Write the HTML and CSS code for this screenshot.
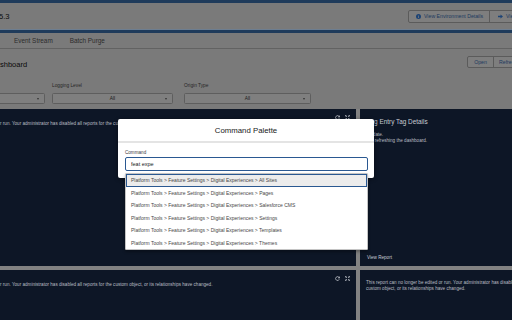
FILE: index.html
```html
<!DOCTYPE html>
<html lang="en">
<head>
<meta charset="utf-8">
<title>Command Palette</title>
<link rel="stylesheet" href="styles.css">
</head>
<body>
<div class="page">
  <div class="strip strip-top"></div>
  <header class="appbar">
    <span class="app-version">5.3</span>
    <div class="app-actions">
      <button class="btn btn-env">
        <svg class="btn-icon" viewBox="0 0 10 10" width="5" height="5"><circle cx="5" cy="5" r="5" fill="#1d4476"/><rect x="4.2" y="4.2" width="1.6" height="3.8" fill="#7e7e7e"/><circle cx="5" cy="2.7" r="0.9" fill="#7e7e7e"/></svg>
        <span>View Environment Details</span>
      </button>
      <button class="btn btn-logs">
        <svg class="btn-icon" viewBox="0 0 10 10" width="5" height="5"><path d="M0 3.5h5V1l5 4-5 4V6.5H0z" fill="#1d4476"/></svg>
        <span>View Logs</span>
      </button>
    </div>
  </header>
  <div class="strip strip-nav"></div>
  <nav class="tabs">
    <span class="tab">Event Stream</span>
    <span class="tab">Batch Purge</span>
  </nav>
  <section class="dash-head">
    <h1 class="dash-title">shboard</h1>
    <div class="btn-group">
      <button class="gbtn gbtn-open">Open</button>
      <button class="gbtn gbtn-refresh">Refresh</button>
    </div>
  </section>
  <section class="filters">
    <div class="filter filter-1">
      <span class="filter-label"></span>
      <div class="select"><span></span><span class="select-value"></span><span class="select-arrow"></span></div>
    </div>
    <div class="filter filter-2">
      <span class="filter-label">Logging Level</span>
      <div class="select"><span></span><span class="select-value">All</span><span class="select-arrow"></span></div>
    </div>
    <div class="filter filter-3">
      <span class="filter-label">Origin Type</span>
      <div class="select"><span></span><span class="select-value">All</span><span class="select-arrow"></span></div>
    </div>
  </section>
  <section class="grid">
    <div class="panel panel-left">
      <div class="panel-tools">
        <svg viewBox="0 0 10 10" width="5" height="5"><path d="M8.3 3.2A3.8 3.8 0 1 0 8.6 6.4" fill="none" stroke="#c3c7ce" stroke-width="1.5"/><path d="M9.6 0.6v4h-4z" fill="#c3c7ce"/></svg>
        <svg viewBox="0 0 10 10" width="5" height="5"><path d="M1 1l3 3M9 1L6 4M1 9l3-3M9 9L6 6" stroke="#c3c7ce" stroke-width="1.4"/><path d="M0.5 0.5h3.2L0.5 3.7zM9.5 0.5v3.2L6.3 0.5zM0.5 9.5V6.3l3.2 3.2zM9.5 9.5H6.3l3.2-3.2z" fill="#c3c7ce"/></svg>
      </div>
      <p class="panel-text">r run. Your administrator has disabled all reports for the custom object, or its relationships have changed.</p>
    </div>
    <div class="panel panel-right">
      <h2 class="panel-title">Log Entry Tag Details</h2>
      <p class="panel-text">Update.<br>Try refreshing the dashboard.</p>
      <a class="panel-link">View Report</a>
    </div>
    <div class="panel panel-left">
      <div class="panel-tools">
        <svg viewBox="0 0 10 10" width="5" height="5"><path d="M8.3 3.2A3.8 3.8 0 1 0 8.6 6.4" fill="none" stroke="#c3c7ce" stroke-width="1.5"/><path d="M9.6 0.6v4h-4z" fill="#c3c7ce"/></svg>
        <svg viewBox="0 0 10 10" width="5" height="5"><path d="M1 1l3 3M9 1L6 4M1 9l3-3M9 9L6 6" stroke="#c3c7ce" stroke-width="1.4"/><path d="M0.5 0.5h3.2L0.5 3.7zM9.5 0.5v3.2L6.3 0.5zM0.5 9.5V6.3l3.2 3.2zM9.5 9.5H6.3l3.2-3.2z" fill="#c3c7ce"/></svg>
      </div>
      <p class="panel-text">r run. Your administrator has disabled all reports for the custom object, or its relationships have changed.</p>
    </div>
    <div class="panel panel-right panel-bottom">
      <p class="panel-text">This report can no longer be edited or run. Your administrator has disabled all reports for the<br>custom object, or its relationships have changed.</p>
    </div>
  </section>
</div>

<div class="modal" role="dialog" aria-label="Command Palette">
  <div class="modal-header">Command Palette</div>
  <div class="modal-body">
    <label class="field-label" for="cmd">Command</label>
    <div class="combo">
      <input id="cmd" class="combo-input" type="text" value="feat expe">
      <ul class="listbox">
        <li class="option active">Platform Tools &gt; Feature Settings &gt; Digital Experiences &gt; All Sites</li>
        <li class="option">Platform Tools &gt; Feature Settings &gt; Digital Experiences &gt; Pages</li>
        <li class="option">Platform Tools &gt; Feature Settings &gt; Digital Experiences &gt; Salesforce CMS</li>
        <li class="option">Platform Tools &gt; Feature Settings &gt; Digital Experiences &gt; Settings</li>
        <li class="option">Platform Tools &gt; Feature Settings &gt; Digital Experiences &gt; Templates</li>
        <li class="option">Platform Tools &gt; Feature Settings &gt; Digital Experiences &gt; Themes</li>
      </ul>
    </div>
  </div>
</div>
</body>
</html>
```

FILE: styles.css
```css
* { box-sizing: border-box; margin: 0; padding: 0; }
html, body { width: 512px; height: 320px; overflow: hidden; }
body {
  position: relative;
  background: #7a7a7a;
  font-family: "Liberation Sans", Arial, sans-serif;
  color: #111;
}
button { font-family: inherit; }
.page { width: 512px; }

.strip { background: #1f3b5b; }
.strip-top { height: 3px; }
.strip-nav { height: 4px; border-top: 1px solid #6d7e91; }

.appbar { height: 26px; display: flex; align-items: center; }
.app-version { font-size: 7.6px; margin-left: -1px; color: #0c0c0c; }
.app-actions { margin-left: auto; margin-right: -17px; display: flex; flex-shrink: 0; }
.btn {
  display: flex; align-items: center; gap: 3px;
  height: 13px; padding: 0 6px 0 7px;
  border: 1px solid #5b5b5b; background: #7e7e7e;
  color: #1d3a5e; font-size: 5.2px; white-space: nowrap;
}
.btn-env { width: 82px; border-radius: 2px 0 0 2px; }
.btn-logs { width: 40px; margin-left: -1px; padding-left: 8px; }
.btn-icon { flex-shrink: 0; }

.tabs {
  height: 16px; display: flex; align-items: center;
  padding-left: 5.5px; border-bottom: 1px solid #626262;
}
.tab { padding: 0 8.5px; font-size: 6.4px; color: #2c2c2c; }

.dash-head {
  height: 19px; padding-top: 7px;
  display: flex; justify-content: space-between; align-items: flex-end;
}
.dash-title { font-size: 7.5px; line-height: 9px; font-weight: 400; color: #0a0a0a; margin-bottom: -1px; }
.btn-group { display: flex; margin-right: -15px; }
.gbtn {
  height: 12px; border: 1px solid #5b5b5b; background: #7e7e7e;
  color: #1d3a5e; font-size: 5.2px; white-space: nowrap;
}
.gbtn-open { width: 27px; border-radius: 2px 0 0 2px; }
.gbtn-refresh { width: 34px; margin-left: -1px; text-align: left; padding-left: 5px; }

.filters { display: flex; margin-top: 15px; }
.filter { display: flex; flex-direction: column; }
.filter-label { height: 6px; line-height: 6px; font-size: 4.8px; color: #262626; margin-bottom: 4px; white-space: nowrap; }
.filter-1 { margin-left: -100px; width: 145px; }
.filter-2 { margin-left: 7px; width: 121px; }
.filter-3 { margin-left: 11px; width: 127px; }
.select {
  height: 11px; display: grid; grid-template-columns: 1fr auto 1fr; align-items: center;
  border: 1px solid #5e5e5e; border-radius: 1.5px; background: #7f7f7f;
}
.select-value { font-size: 4.8px; color: #1a1a1a; }
.select-arrow {
  justify-self: end; margin-right: 5px; width: 0; height: 0;
  border-left: 1.6px solid transparent; border-right: 1.6px solid transparent;
  border-top: 2px solid #333;
}

.grid {
  margin-top: 5px;
  display: grid; grid-template-columns: 356px 217px; grid-template-rows: 157px 60px;
  gap: 4px; background: #828282;
}
.panel { background: #0d1626; color: #b9bdc4; font-size: 4.6px; line-height: 5.5px; }
.panel-left { padding-top: 5px; }
.panel-tools { height: 7px; display: flex; justify-content: flex-end; align-items: center; gap: 5px; padding-right: 6px; }
.panel-text { white-space: nowrap; }
.panel-right { display: flex; flex-direction: column; padding: 9px 6px 6px 7px; }
.panel-title { font-size: 6.4px; line-height: 8px; font-weight: 400; color: #c7cbd2; }
.panel-right .panel-text { margin-top: 6px; }
.panel-link { margin-top: auto; color: #c7cbd2; }
.panel-bottom { padding: 10px 6px 0 6px; }
.panel-bottom .panel-text { margin-top: 0; }

.modal {
  position: absolute; left: 118px; top: 119px; width: 256px;
  background: #fff; border-radius: 2px;
  box-shadow: 0 1px 4px rgba(0,0,0,.45);
}
.modal-header {
  height: 24px; display: flex; align-items: center; justify-content: center;
  border-bottom: 2px solid #e4e4e4;
  font-size: 7.8px; color: #181818;
}
.modal-body { padding: 7px 6px 7px 7px; }
.field-label { display: block; font-size: 4.6px; line-height: 6px; color: #3c3c3c; margin-bottom: 1px; }
.combo { position: relative; }
.combo-input {
  display: block; width: 100%; height: 14px;
  border: 1px solid #2a5891; border-radius: 2px; padding: 0 5px;
  font-family: "Liberation Sans", Arial, sans-serif; font-size: 5.5px; color: #181818;
  background: #fff; outline: none;
}
.listbox {
  position: absolute; left: 0; right: 0; top: calc(100% + 2px);
  list-style: none; background: #fff;
  border: 1px solid #c4c4c4; border-radius: 1px;
  box-shadow: 0 2px 3px rgba(0,0,0,.3);
}
.option {
  height: 12.5px; line-height: 12.5px; padding-left: 5px;
  font-size: 5px; color: #474747; white-space: nowrap;
}
.option.active { background: #ececec; outline: 1px solid #2a5891; outline-offset: -1px; }
```
